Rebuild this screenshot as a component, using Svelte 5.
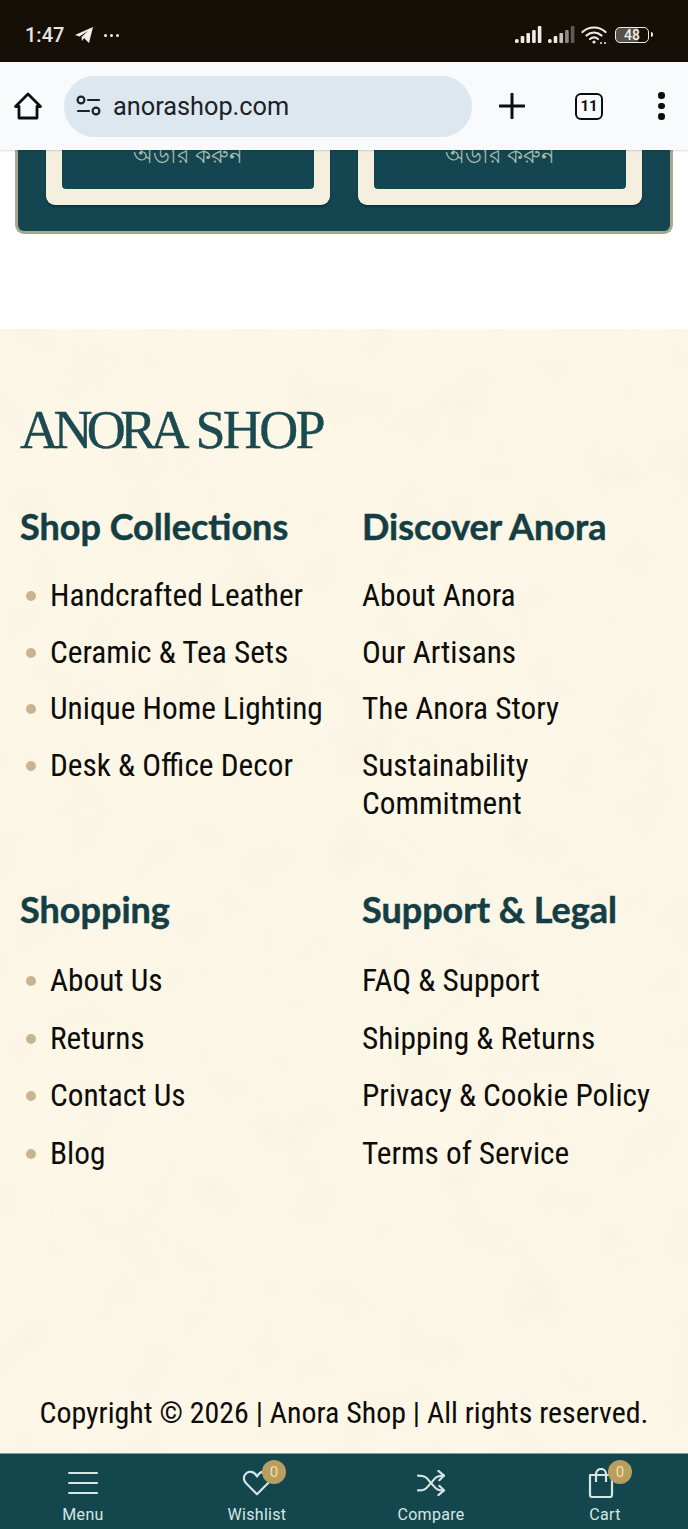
<script>
	const groups = [
		{
			title: 'Shop Collections',
			bullets: true,
			links: ['Handcrafted Leather', 'Ceramic & Tea Sets', 'Unique Home Lighting', 'Desk & Office Decor']
		},
		{
			title: 'Discover Anora',
			bullets: false,
			links: ['About Anora', 'Our Artisans', 'The Anora Story', 'Sustainability Commitment']
		},
		{
			title: 'Shopping',
			bullets: true,
			links: ['About Us', 'Returns', 'Contact Us', 'Blog']
		},
		{
			title: 'Support & Legal',
			bullets: false,
			links: ['FAQ & Support', 'Shipping & Returns', 'Privacy & Cookie Policy', 'Terms of Service']
		}
	];
</script>

<div class="status">
	<div class="status-left">
		<span class="time">1:47</span>
		<svg width="20" height="18" viewBox="0 0 20 18"><path d="M1 9 19 1 15 17 10 12 8 15 7.500 11 14 5 5.500 10.500Z" fill="#f4f1ea" /></svg>
		<span class="dots">
			<i></i><i></i><i></i>
		</span>
	</div>
	<div class="status-right">
		<svg width="27" height="18" viewBox="0 0 27 18" fill="#efece6">
			<rect x="0" y="13" width="3.600" height="4" rx="1.500" /><rect x="5.700" y="10" width="3.600" height="7" rx="1" /><rect x="11.400" y="7" width="3.600" height="10" rx="1" /><rect x="17.100" y="4" width="3.600" height="13" rx="1" /><rect x="22.800" y="0" width="3.600" height="17" rx="1" />
		</svg>
		<svg width="27" height="18" viewBox="0 0 27 18" fill="#efece6">
			<rect x="0" y="13" width="3.600" height="4" rx="1.500" /><rect x="5.700" y="10" width="3.600" height="7" rx="1" /><rect x="11.400" y="7" width="3.600" height="10" rx="1" opacity=".8" /><rect x="17.100" y="4" width="3.600" height="13" rx="1" opacity=".55" /><rect x="22.800" y="0" width="3.600" height="17" rx="1" opacity=".35" />
		</svg>
		<svg class="wifi" width="26" height="20" viewBox="0 0 26 20" fill="none" stroke="#efece6" stroke-width="2.200" stroke-linecap="round">
			<path d="M1.500 7C8 1 18 1 24.500 7" /><path d="M5.500 10.500C10 6.500 16 6.500 20.500 10.500" /><path d="M9 14C11.500 12 14.500 12 17 14" />
			<circle cx="13" cy="17" r="1.600" fill="#efece6" stroke="none" /><circle cx="20" cy="18" r="1" fill="#efece6" stroke="none" /><circle cx="24" cy="18" r="1" fill="#efece6" stroke="none" />
		</svg>
		<div class="battery"><span>48</span></div>
	</div>
</div>

<div class="toolbar">
	<svg width="30" height="30" viewBox="0 0 30 30" fill="none" stroke="#0d0d0f" stroke-width="2.800" stroke-linejoin="round"><path d="M2.500 15.500 15 3 27.500 15.500H24V27H6V15.500Z" /></svg>
	<div class="omnibox">
		<svg width="26" height="22" viewBox="0 0 26 22" fill="none" stroke="#1d2026" stroke-width="2.200" stroke-linecap="round">
			<circle cx="5" cy="5" r="3.400" /><path d="M12 5H23" /><path d="M2 16H13" /><circle cx="20" cy="16" r="3.400" />
		</svg>
		<span>anorashop.com</span>
	</div>
	<svg class="plus" width="26" height="26" viewBox="0 0 26 26" stroke="#0d0d0f" stroke-width="3" stroke-linecap="round"><path d="M13 1V25M1 13H25" /></svg>
	<div class="tabs">11</div>
	<div class="more"><i></i><i></i><i></i></div>
</div>

<div class="promo">
	<div class="promo-card">
		<div class="frame"><div class="order">অর্ডার করুন</div></div>
		<div class="frame"><div class="order">অর্ডার করুন</div></div>
	</div>
</div>

<footer>
	<svg class="paper" width="688" height="1124" aria-hidden="true">
		<filter id="mottle">
			<feTurbulence type="fractalNoise" baseFrequency="0.018" numOctaves="4" seed="7" />
			<feColorMatrix values="0 0 0 0 0.93  0 0 0 0 0.87  0 0 0 0 0.74  0 0 0 1 -0.42" />
		</filter>
		<rect width="688" height="1124" filter="url(#mottle)" />
	</svg>
	<div class="logo"><span class="w1">ANORA</span> <span class="w2">SHOP</span></div>
	<div class="columns">
		{#each groups as group}
			<section>
				<h3>{group.title}</h3>
				<ul class:bullets={group.bullets}>
					{#each group.links as link}
						<li>{link}</li>
					{/each}
				</ul>
			</section>
		{/each}
	</div>
	<p class="copyright">Copyright © 2026 | Anora Shop | All rights reserved.</p>
</footer>

<nav>
	<div class="item">
		<div class="slot">
			<svg width="30" height="24" viewBox="0 0 30 24" stroke="#d5e6e6" stroke-width="2" stroke-linecap="round"><path d="M1 2H29M1 12H29M1 22H29" /></svg>
		</div>
		<span>Menu</span>
	</div>
	<div class="item">
		<div class="slot">
			<div class="icon heart">
				<svg width="30" height="26" viewBox="0 0 32 28" fill="none" stroke="#d5e6e6" stroke-width="2.300" stroke-linejoin="round"><path d="M16 26 4 14C-1 8 4 1 10 2 13 2.500 15 5 16 7 17 5 19 2.500 22 2 28 1 33 8 28 14Z" /></svg>
				<b>0</b>
			</div>
		</div>
		<span>Wishlist</span>
	</div>
	<div class="item">
		<div class="slot">
			<svg width="30" height="26" viewBox="0 0 32 28" fill="none" stroke="#d5e6e6" stroke-width="2.300" stroke-linecap="round" stroke-linejoin="round">
				<path d="M2 6C10 6 11 8 16 14S22 22 30 22" /><path d="M2 22C10 22 11 20 16 14S22 6 30 6" /><path d="M24 1 30 6 25 11M25 17 30 22 24 27" />
			</svg>
		</div>
		<span>Compare</span>
	</div>
	<div class="item">
		<div class="slot">
			<div class="icon cart">
				<svg width="26" height="30" viewBox="0 0 26 30" fill="none" stroke="#d5e6e6" stroke-width="2.200" stroke-linejoin="round"><path d="M2 7H24V27A2 2 0 0 1 22 29H4A2 2 0 0 1 2 27Z" /><path d="M8 14V6A5 5 0 0 1 18 6V14" /></svg>
				<b>0</b>
			</div>
		</div>
		<span>Cart</span>
	</div>
</nav>

<style>
	:global(body) {
		background: #fff;
		font-family: Roboto, sans-serif;
	}
	.status {
		height: 62px;
		background: #160f08;
		display: flex;
		align-items: center;
		justify-content: space-between;
		padding: 0 39px 0 25px;
		box-sizing: border-box;
		color: #f1eee8;
	}
	.status-left,
	.status-right {
		display: flex;
		align-items: center;
		padding-top: 8px;
	}
	.time {
		font-size: 20px;
		font-weight: 500;
		margin-right: 10px;
		color: #e9e6df;
	}
	.dots {
		display: flex;
		gap: 3px;
		margin-left: 10px;
	}
	.dots i {
		width: 3px;
		height: 3px;
		border-radius: 50%;
		background: #f1eee8;
	}
	.status-right {
		gap: 6px;
	}
	.wifi {
		margin: 0 2px 0 0;
	}
	.battery {
		width: 32px;
		height: 14px;
		border: 1.500px solid #efece6;
		border-radius: 5px;
		position: relative;
		font-size: 14px;
		font-weight: 500;
		line-height: 14px;
		text-align: center;
		background: linear-gradient(90deg, #55514b 70%, transparent 70%);
	}
	.battery::after {
		content: '';
		position: absolute;
		right: -5px;
		top: 4px;
		width: 2px;
		height: 5px;
		background: #efece6;
		border-radius: 0 2px 2px 0;
	}
	.toolbar {
		height: 88px;
		background: #f9fafc;
		box-shadow: 0 1px 2px rgba(0, 0, 0, 0.14);
		position: relative;
		z-index: 2;
		display: flex;
		align-items: center;
		padding-left: 13px;
		box-sizing: border-box;
	}
	.omnibox {
		width: 408px;
		height: 61px;
		margin-left: 21px;
		border-radius: 31px;
		background: #dde7ef;
		display: flex;
		align-items: center;
		padding-left: 12px;
		box-sizing: border-box;
		gap: 11px;
		font-size: 25.300px;
		color: #1d2026;
	}
	.plus {
		margin-left: 27px;
	}
	.tabs {
		width: 24px;
		height: 23px;
		margin-left: 50px;
		border: 2.800px solid #0d0d0f;
		border-radius: 6px;
		font-size: 15px;
		font-weight: 700;
		line-height: 23px;
		text-align: center;
		color: #0d0d0f;
	}
	.more {
		display: flex;
		flex-direction: column;
		gap: 4px;
		margin-left: 55px;
	}
	.more i {
		width: 6.500px;
		height: 6.500px;
		border-radius: 50%;
		background: #0d0d0f;
	}
	.promo {
		height: 179px;
		background: #fff;
		padding: 0 15px;
		box-sizing: border-box;
	}
	.promo-card {
		height: 84px;
		background: #134650;
		border: 3px solid #a6a98f;
		border-top: 0;
		border-radius: 0 0 9px 9px;
		display: flex;
		justify-content: center;
		gap: 28px;
		box-sizing: border-box;
	}
	.frame {
		width: 284px;
		height: 55px;
		background: #f5efdf;
		border-radius: 0 0 9px 9px;
		box-shadow: 0 2px 2px rgba(0, 0, 0, 0.3);
		padding: 0 16px 16px;
		box-sizing: border-box;
	}
	.order {
		height: 39px;
		background: #134650;
		border-radius: 0 0 4px 4px;
		color: #a5bcae;
		font-family: 'Noto Sans', sans-serif;
		font-size: 23px;
		line-height: 9px;
		text-align: center;
		overflow: hidden;
	}
	footer {
		height: 1124px;
		box-sizing: border-box;
		padding: 70px 20px 0;
		background-color: #fdf7e7;
		position: relative;
	}
	.paper {
		position: absolute;
		left: 0;
		top: 0;
	}
	.logo,
	.columns,
	.copyright {
		position: relative;
	}
	.logo {
		font-family: 'Liberation Serif', serif;
		font-size: 54px;
		line-height: 62px;
		color: #1b4a50;
		white-space: nowrap;
		-webkit-text-stroke: 0.4px #1b4a50;
	}
	.w1 {
		letter-spacing: -5.600px;
	}
	.w2 {
		letter-spacing: -2.700px;
		margin-left: -2px;
	}
	.columns {
		display: grid;
		grid-template-columns: 342px 1fr;
		margin-top: 43px;
		row-gap: 65px;
	}
	h3 {
		margin: 0 0 29px;
		font-family: Lato, sans-serif;
		font-size: 36px;
		font-weight: 700;
		line-height: 44px;
		color: #143e44;
		white-space: nowrap;
		-webkit-text-stroke: 0.5px #143e44;
	}
	section:nth-child(n + 3) h3 {
		margin-bottom: 31px;
	}
	section:nth-child(n + 3) ul {
		gap: 20px;
	}
	ul {
		list-style: none;
		margin: 0;
		padding: 0;
		display: flex;
		flex-direction: column;
		gap: 19.200px;
	}
	li {
		font-size: 31.300px;
		font-stretch: 87%;
		line-height: 37.500px;
		color: #0c0c0a;
	}
	.bullets li {
		padding-left: 30px;
		position: relative;
		white-space: nowrap;
	}
	.bullets li::before {
		content: '';
		position: absolute;
		left: 6px;
		top: 14px;
		width: 10px;
		height: 10px;
		border-radius: 50%;
		background: #c7b592;
	}
	.copyright {
		margin: 222px -20px 0;
		text-align: center;
		font-size: 29.900px;
		font-stretch: 87%;
		line-height: 38px;
		color: #0c0c0a;
		white-space: nowrap;
	}
	nav {
		height: 76px;
		background: #14464d;
		border-top: 1px solid #7f9c98;
		box-sizing: border-box;
		display: grid;
		grid-template-columns: repeat(4, 174px);
		justify-content: center;
		overflow: hidden;
		padding-top: 14px;
	}
	.item {
		display: flex;
		flex-direction: column;
		align-items: center;
		color: #d5e6e6;
		font-size: 16px;
		line-height: 20px;
		letter-spacing: 0.3px;
		gap: 7px;
	}
	.slot {
		height: 30px;
		display: flex;
		align-items: center;
	}
	.icon {
		position: relative;
		display: flex;
	}
	.cart {
		margin-left: -8px;
	}
	.icon b {
		position: absolute;
		width: 24px;
		height: 24px;
		border-radius: 50%;
		background: #b89f5f;
		color: #f0dfa8;
		font-size: 15px;
		font-weight: 400;
		line-height: 24px;
		text-align: center;
		letter-spacing: 0;
	}
	.heart b {
		right: -14px;
		top: -10px;
	}
	.cart b {
		right: -18px;
		top: -8px;
	}
</style>
